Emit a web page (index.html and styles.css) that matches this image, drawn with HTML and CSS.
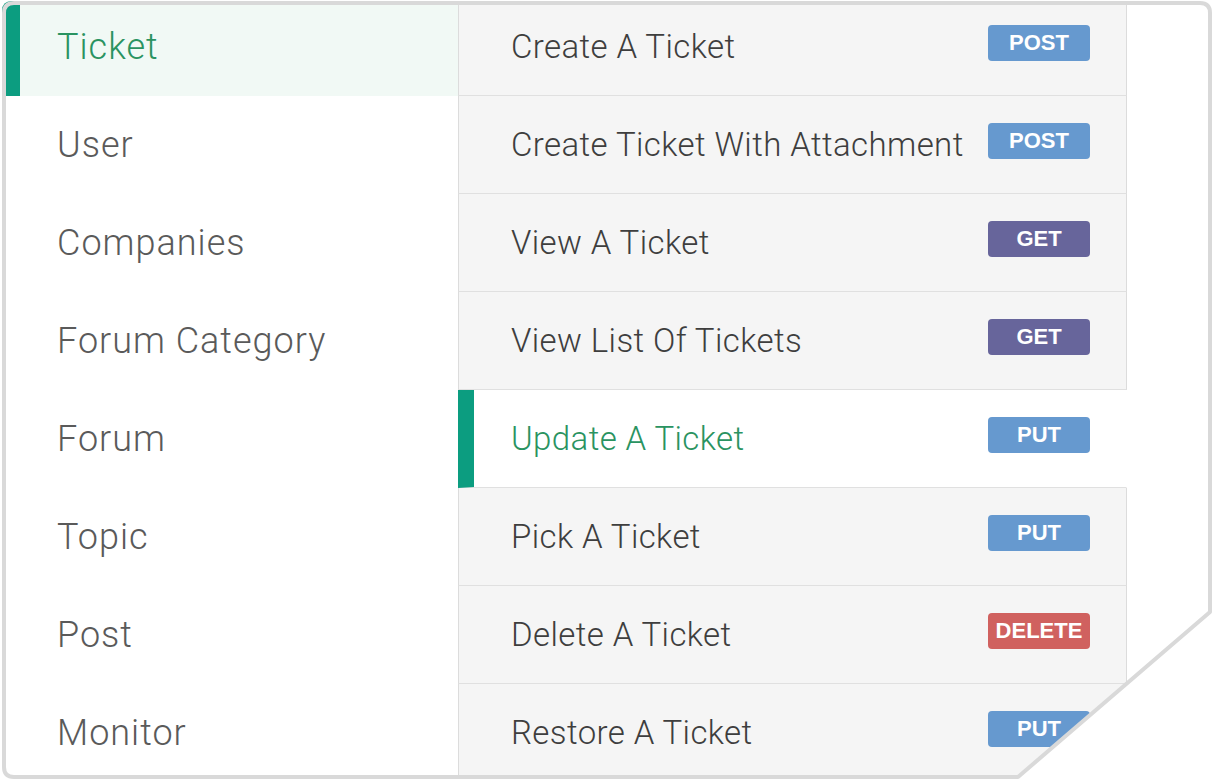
FILE: index.html
```html
<!DOCTYPE html>
<html>
<head>
<meta charset="utf-8">
<link rel="stylesheet" href="styles.css">
</head>
<body>
<div class="frame">
  <div class="card">
    <ul class="cats">
      <li class="cat active">Ticket</li>
      <li class="cat">User</li>
      <li class="cat">Companies</li>
      <li class="cat">Forum Category</li>
      <li class="cat">Forum</li>
      <li class="cat">Topic</li>
      <li class="cat">Post</li>
      <li class="cat">Monitor</li>
    </ul>
    <ul class="ops">
      <li class="op"><span class="name">Create A Ticket</span><span class="badge post">POST</span></li>
      <li class="op"><span class="name">Create Ticket With Attachment</span><span class="badge post">POST</span></li>
      <li class="op"><span class="name">View A Ticket</span><span class="badge get">GET</span></li>
      <li class="op"><span class="name">View List Of Tickets</span><span class="badge get">GET</span></li>
      <li class="op active"><span class="name">Update A Ticket</span><span class="badge put">PUT</span></li>
      <li class="op"><span class="name">Pick A Ticket</span><span class="badge put">PUT</span></li>
      <li class="op"><span class="name">Delete A Ticket</span><span class="badge delete">DELETE</span></li>
      <li class="op"><span class="name">Restore A Ticket</span><span class="badge put">PUT</span></li>
    </ul>
  </div>
  <svg class="outline" width="1218" height="781" viewBox="0 0 1218 781">
    <path d="M 14 3 H 1200 Q 1210 3 1210 13 V 612 L 1018 777 H 14 Q 4 777 4 767 V 13 Q 4 3 14 3 Z" fill="none" stroke="#d9d9d9" stroke-width="4" stroke-linejoin="round"/>
  </svg>
</div>
</body>
</html>
```
FILE: styles.css
```css
* { box-sizing: border-box; }
html, body { margin: 0; padding: 0; background: #fff; }
body { font-family: Roboto, "Noto Sans", sans-serif; }

.frame {
  position: relative;
  width: 1218px;
  height: 781px;
  overflow: hidden;
}

.card {
  display: flex;
  width: 1218px;
  height: 781px;
  background: #fff;
  clip-path: path('M 12 1 H 1202 Q 1212 1 1212 11 V 611 L 1015 779 H 12 Q 2 779 2 769 V 11 Q 2 1 12 1 Z');
}

.cats, .ops {
  list-style: none;
  margin: -2px 0 0 0;
  padding: 0;
}

.cats { width: 458px; flex: none; }

.cat {
  height: 98px;
  display: flex;
  align-items: center;
  padding-left: 57px;
  font-size: 36px;
  letter-spacing: 1px;
  font-weight: 300;
  color: #5a5a5a;
}

.cat.active {
  background: #f1f9f5;
  border-left: 20px solid #0c9d80;
  padding-left: 37px;
  color: #2a9361;
}

.ops { width: 669px; flex: none; }

.op {
  height: 98px;
  display: flex;
  align-items: center;
  justify-content: space-between;
  padding: 0 36px 0 52px;
  background: #f5f5f5;
  border-left: 1px solid #dcdcdc;
  border-right: 1px solid #dcdcdc;
  border-bottom: 1px solid #e0e0e0;
  font-size: 33px;
  letter-spacing: 0.4px;
  font-weight: 300;
  color: #3e3e3e;
}

.op.active {
  background: #fff;
  border-left: 16px solid #0c9d80;
  border-right-color: transparent;
  padding-left: 37px;
  color: #2a9361;
}

.badge {
  width: 102px;
  height: 36px;
  border-radius: 4px;
  margin-bottom: 7px;
  display: flex;
  align-items: center;
  justify-content: center;
  font-family: "Liberation Sans", Arial, sans-serif;
  font-weight: bold;
  font-size: 22px;
  letter-spacing: 0;
  color: #fff;
}

.post, .put { background: #6699cf; }
.get { background: #67659b; }
.delete { background: #d0615f; }

.outline {
  position: absolute;
  left: 0;
  top: 0;
  pointer-events: none;
}
```
